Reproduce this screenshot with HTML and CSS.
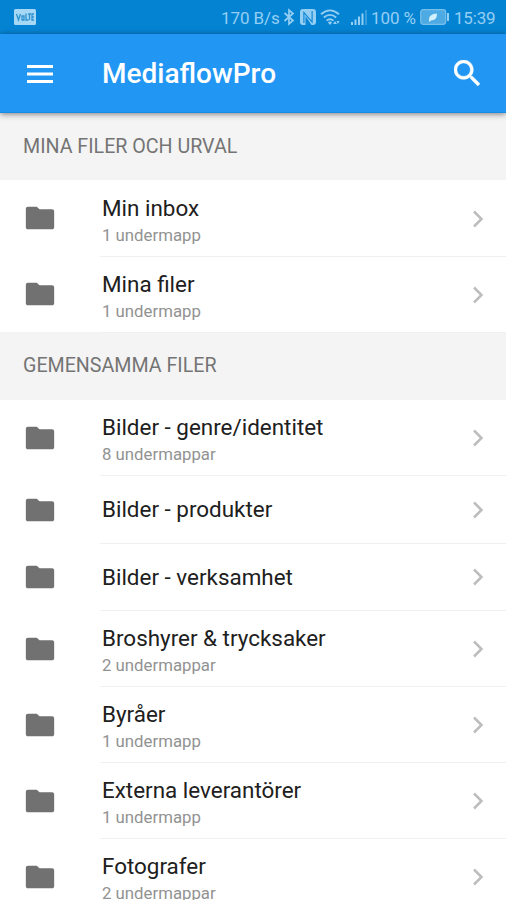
FILE: index.html
```
<!DOCTYPE html>
<html lang="sv">
<head>
<meta charset="utf-8">
<title>MediaflowPro</title>
<link rel="stylesheet" href="styles.css">
</head>
<body>
<svg width="0" height="0" class="defs">
  <symbol id="folder" viewBox="0 0 24 24"><path d="M9.700 4H3.500C2.600 4 2 4.600 2 5.500V18.500C2 19.400 2.600 20 3.500 20H20.500C21.400 20 22 19.400 22 18.500V7.400C22 6.500 21.400 5.900 20.500 5.900H11.700z"/></symbol>
  <symbol id="chevron" viewBox="0 0 12 18"><path d="M2 1.500 9.500 9 2 16.500" fill="none" stroke="currentColor" stroke-width="2.500"/></symbol>
</svg>
<div class="status">
  <svg class="volte" viewBox="0 0 22 16"><rect width="22" height="16" rx="1.500" fill="#a6d8f6"/><path d="M2.500 5 4.500 11 6.500 5M8 7h2v4H8zM12 4.500V11h2.500M14 5h3M15.500 5v6M20 5h-2v6h2M18 8h2" fill="none" stroke="#2d91cf" stroke-width="1.300"/></svg>
  <span class="speed">170 B/s</span>
  <svg class="bt" viewBox="0 0 12 18"><path d="M1.500 5 10 12.500 6 16V2l4 3.500L1.500 13" fill="none" stroke="currentColor" stroke-width="1.700"/></svg>
  <svg class="nfc" viewBox="0 0 16 16"><path d="M3 0H13Q16 0 16 3V13Q16 16 13 16H11.500L5.500 7V16H3Q0 16 0 13V3Q0 0 3 0z" fill="currentColor"/><path d="M3.900 14V3.500L12.100 13V2" fill="none" stroke="#0583d3" stroke-width="1.100"/></svg>
  <svg class="wifi" viewBox="0 0 20 16"><g fill="none" stroke="currentColor" stroke-width="1.800"><path d="M1 5.200Q10-2.500 19 5.200M3.800 8.500Q10 3.300 16.200 8.500M6.500 11.600Q10 8.800 13.500 11.600"/></g><path d="M7.800 13.300Q10 11.800 12.200 13.300L10 16zM15 12l2 3h-4zM18 15l-1.500-3h3z" fill="currentColor"/></svg>
  <svg class="signal" viewBox="0 0 16 15"><path d="M0 12h2v3H0zM3.500 9.500h2V15h-2zM7 6.500h2V15H7zM10.500 3.500h2V15h-2z" fill="currentColor"/><path d="M14 0h2v15h-2z" fill="currentColor" opacity=".35"/></svg>
  <span class="percent">100 %</span>
  <svg class="battery" viewBox="0 0 29 16"><rect x=".7" y=".7" width="25" height="14.600" rx="2.500" fill="#4eaae3" stroke="#78c0ec" stroke-width="1.200"/><path d="M27 4h2v8h-2z" fill="currentColor"/><path d="M9 11Q8.500 5 17 4.500Q17 11.500 11 11.500L9 13z" fill="#d3f1fd"/></svg>
  <span class="time">15:39</span>
</div>
<header class="bar">
  <svg class="menu" viewBox="0 0 26 18"><path d="M0 1.500h26M0 9h26M0 16.500h26" stroke="currentColor" stroke-width="3"/></svg>
  <h1>MediaflowPro</h1>
  <svg class="search" viewBox="3 3 17.500 17.500"><path d="M15.500 14h-.79l-.28-.27C15.410 12.590 16 11.110 16 9.500 16 5.910 13.090 3 9.500 3S3 5.910 3 9.500 5.910 16 9.500 16c1.610 0 3.090-.59 4.230-1.570l.27.280v.79l5 4.990L20.490 19l-4.990-5zm-6 0C7.010 14 5 11.990 5 9.500S7.010 5 9.500 5 14 7.010 14 9.500 11.990 14 9.500 14z" fill="currentColor" stroke="currentColor" stroke-width=".3"/></svg>
</header>
<main>
  <h2>MINA FILER OCH URVAL</h2>
  <ul>
    <li><svg class="folder"><use href="#folder"/></svg><div class="text"><b>Min inbox</b><small>1 undermapp</small></div><svg class="chev"><use href="#chevron"/></svg></li>
    <li><svg class="folder"><use href="#folder"/></svg><div class="text"><b>Mina filer</b><small>1 undermapp</small></div><svg class="chev"><use href="#chevron"/></svg></li>
  </ul>
  <h2 class="second">GEMENSAMMA FILER</h2>
  <ul class="shared">
    <li><svg class="folder"><use href="#folder"/></svg><div class="text"><b>Bilder - genre/identitet</b><small>8 undermappar</small></div><svg class="chev"><use href="#chevron"/></svg></li>
    <li class="single"><svg class="folder"><use href="#folder"/></svg><div class="text"><b>Bilder - produkter</b></div><svg class="chev"><use href="#chevron"/></svg></li>
    <li class="single"><svg class="folder"><use href="#folder"/></svg><div class="text"><b>Bilder - verksamhet</b></div><svg class="chev"><use href="#chevron"/></svg></li>
    <li><svg class="folder"><use href="#folder"/></svg><div class="text"><b>Broshyrer &amp; trycksaker</b><small>2 undermappar</small></div><svg class="chev"><use href="#chevron"/></svg></li>
    <li><svg class="folder"><use href="#folder"/></svg><div class="text"><b>Byråer</b><small>1 undermapp</small></div><svg class="chev"><use href="#chevron"/></svg></li>
    <li><svg class="folder"><use href="#folder"/></svg><div class="text"><b>Externa leverantörer</b><small>1 undermapp</small></div><svg class="chev"><use href="#chevron"/></svg></li>
    <li><svg class="folder"><use href="#folder"/></svg><div class="text"><b>Fotografer</b><small>2 undermappar</small></div><svg class="chev"><use href="#chevron"/></svg></li>
  </ul>
</main>
</body>
</html>
```
FILE: styles.css
```
* { box-sizing: border-box; margin: 0; padding: 0; }
body {
  height: 900px;
  overflow: hidden;
  display: flex;
  flex-direction: column;
  background: #fff;
  font-family: Roboto, sans-serif;
}
svg { display: block; flex: none; }
.defs { display: none; }
.status {
  flex: none;
  height: 34px;
  display: flex;
  align-items: center;
  padding: 0 10px 0 14px;
  background: #0583d3;
  color: #94cff3;
  font-size: 17px;
  white-space: nowrap;
}
.status span { line-height: 34px; padding-top: 2px; }
.volte { width: 22px; height: 16px; }
.speed { margin-left: auto; width: 59px; letter-spacing: -.1px; }
.bt { width: 12px; height: 18px; margin-left: 3px; }
.nfc { width: 16px; height: 16px; margin-left: 5px; }
.wifi { width: 20px; height: 16px; margin-left: 4px; }
.signal { width: 16px; height: 15px; margin-left: 11px; }
.percent { width: 45px; margin-left: 4px; letter-spacing: -.1px; }
.battery { width: 29px; height: 16px; margin-left: 4px; }
.time { width: 42px; margin-left: 5px; letter-spacing: -.2px; }
.bar {
  flex: none;
  position: relative;
  height: 79px;
  display: flex;
  align-items: center;
  padding: 2px 26px 0 27px;
  background: #2196f3;
  border-bottom: 1px solid #168ce2;
  color: #fff;
  box-shadow: 0 1px 6px rgba(0, 0, 0, .5);
}
.menu { width: 26px; height: 18px; }
h1 { flex: 1; margin-left: 49px; font-size: 28px; font-weight: 500; line-height: 40px; }
.search { width: 26px; height: 26px; margin-top: -3px; }
h2 {
  height: 67px;
  padding: 20px 23px 0;
  background: #f4f4f4;
  color: #747474;
  font-size: 19.650px;
  font-weight: 400;
  line-height: 27px;
}
h2.second { height: 68px; }
ul { list-style: none; }
li {
  height: 76px;
  display: flex;
  align-items: center;
  padding-left: 23px;
  position: relative;
}
li.single { height: 67.500px; }
.folder { width: 34px; height: 34px; fill: #717171; }
.text {
  flex: 1;
  align-self: stretch;
  display: flex;
  flex-direction: column;
  justify-content: center;
  margin-left: 43px;
  padding: 5px 0 0 2px;
  box-shadow: 0 1px #f0f0f0;
}
.shared .text { padding-top: 3px; box-shadow: inset 0 -1px #f0f0f0; }
.shared .single .text { padding-top: 0; padding-bottom: 1px; }
b { font-size: 22.430px; font-weight: 400; line-height: 28px; color: #202020; }
small { font-size: 16.800px; line-height: 26px; color: #929292; }
.chev { position: absolute; right: 22px; top: calc(50% - 8px); width: 12px; height: 18px; color: #bdbdbd; }
.shared .chev { top: calc(50% - 9px); }
```
